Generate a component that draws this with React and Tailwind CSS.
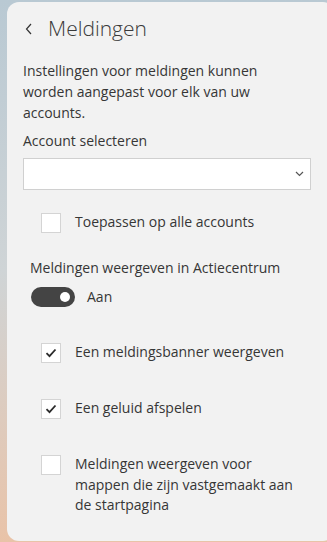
import { useState } from 'react'

function CheckBox({ checked }) {
  return (
    <span className="w-5 h-5 flex-shrink-0 bg-white border border-[#d4d4d4] flex items-center justify-center">
      {checked && (
        <svg width="12" height="10" viewBox="0 0 12 10">
          <path d="M1.5 5.2 L4.5 8.2 L10.5 1.5" fill="none" stroke="#2b2b2b" strokeWidth="1.8" />
        </svg>
      )}
    </span>
  )
}

function CheckRow({ checked, children }) {
  return (
    <div className="flex items-start gap-[14px] pl-[34px]">
      <CheckBox checked={checked} />
      <span className="leading-[20.5px] -mt-[1px] max-w-[222px]">{children}</span>
    </div>
  )
}

export default function App() {
  const [on, setOn] = useState(true)

  return (
    <div
      className="w-[327px] h-[542px] overflow-hidden bg-gradient-to-b from-[#b9c9d3] via-[#cfd4d6] to-[#e9c3a8] pl-[7px] pt-[2px]"
      style={{ fontFamily: '"Open Sans", "Noto Sans", sans-serif' }}
    >
      <div className="w-[328px] h-[539px] bg-[#f2f2f2] rounded-[12px] text-[#363636] text-[14px]">
        {/* Header */}
        <div className="flex items-center h-[52px] pt-[1px]">
          <svg className="ml-[18px]" width="8" height="12" viewBox="0 0 8 12">
            <path d="M6 1 L1.5 6 L6 11" fill="none" stroke="#333" strokeWidth="1.2" />
          </svg>
          <h1 className="ml-[15px] text-[21px] font-light text-[#3a3a3a] leading-none">Meldingen</h1>
        </div>

        <p className="px-4 pt-[6px] leading-[21px] pr-6">
          Instellingen voor meldingen kunnen worden aangepast voor elk van uw accounts.
        </p>

        <div className="px-4 mt-[8px]">
          <div className="leading-[20px]">Account selecteren</div>
          <div className="mt-[7px] w-[288px] h-[32px] bg-white border border-[#d0d0d0] flex items-center justify-end pr-[6px]">
            <svg width="9" height="6" viewBox="0 0 9 6">
              <path d="M1 1 L4.5 4.5 L8 1" fill="none" stroke="#555" strokeWidth="1.2" />
            </svg>
          </div>
        </div>

        <div className="mt-[23px]">
          <CheckRow>Toepassen op alle accounts</CheckRow>
        </div>

        <div className="pl-[23px] mt-[25px] leading-[20px]">Meldingen weergeven in Actiecentrum</div>

        <div className="pl-[24px] mt-[8px] flex items-center gap-[12px]">
          <button
            onClick={() => setOn(!on)}
            className="w-[44px] h-[20px] rounded-full bg-[#444] flex items-center justify-end pr-[5px]"
          >
            <span className="w-[10px] h-[10px] rounded-full bg-white" />
          </button>
          <span>{on ? 'Aan' : 'Uit'}</span>
        </div>

        <div className="mt-[36px]">
          <CheckRow checked>Een meldingsbanner weergeven</CheckRow>
        </div>
        <div className="mt-[36px]">
          <CheckRow checked>Een geluid afspelen</CheckRow>
        </div>
        <div className="mt-[36px]">
          <CheckRow>Meldingen weergeven voor mappen die zijn vastgemaakt aan de startpagina</CheckRow>
        </div>
      </div>
    </div>
  )
}
